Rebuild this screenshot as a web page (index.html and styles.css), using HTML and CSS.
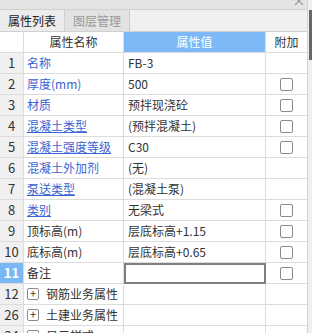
FILE: index.html
```html
<!DOCTYPE html>
<html lang="zh-CN">
<head>
  <meta charset="UTF-8">
  <title>属性列表</title>
  <link rel="stylesheet" href="styles.css">
</head>
<body>
  <div class="frame">
    <div class="panel">
      <div class="strip">
        <svg class="close" width="10" height="10" viewBox="0 0 10 10">
          <path d="M1 -3 L9 5 M9 -3 L1 5" stroke="#9a9a9a" stroke-width="1.2" fill="none"/>
        </svg>
      </div>
      <div class="tabs">
        <div class="tab active">属性列表</div>
        <div class="tab">图层管理</div>
      </div>

      <div class="grid">
        <div class="cell num head"></div>
        <div class="cell head">属性名称</div>
        <div class="cell head value-head">属性值</div>
        <div class="cell head">附加</div>

        <div class="cell num">1</div>
        <div class="cell name link">名称</div>
        <div class="cell val">FB-3</div>
        <div class="cell add"></div>

        <div class="cell num">2</div>
        <div class="cell name link">厚度(mm)</div>
        <div class="cell val">500</div>
        <div class="cell add"><span class="check"></span></div>

        <div class="cell num">3</div>
        <div class="cell name link">材质</div>
        <div class="cell val">预拌现浇砼</div>
        <div class="cell add"><span class="check"></span></div>

        <div class="cell num">4</div>
        <div class="cell name link under">混凝土类型</div>
        <div class="cell val">(预拌混凝土)</div>
        <div class="cell add"><span class="check"></span></div>

        <div class="cell num">5</div>
        <div class="cell name link under">混凝土强度等级</div>
        <div class="cell val">C30</div>
        <div class="cell add"><span class="check"></span></div>

        <div class="cell num">6</div>
        <div class="cell name link">混凝土外加剂</div>
        <div class="cell val">(无)</div>
        <div class="cell add"></div>

        <div class="cell num">7</div>
        <div class="cell name link under">泵送类型</div>
        <div class="cell val">(混凝土泵)</div>
        <div class="cell add"></div>

        <div class="cell num">8</div>
        <div class="cell name link under">类别</div>
        <div class="cell val">无梁式</div>
        <div class="cell add"><span class="check"></span></div>

        <div class="cell num">9</div>
        <div class="cell name">顶标高(m)</div>
        <div class="cell val">层底标高+1.15</div>
        <div class="cell add"><span class="check"></span></div>

        <div class="cell num">10</div>
        <div class="cell name">底标高(m)</div>
        <div class="cell val">层底标高+0.65</div>
        <div class="cell add"><span class="check"></span></div>

        <div class="cell num selected">11</div>
        <div class="cell name">备注</div>
        <div class="cell val editing"></div>
        <div class="cell add"><span class="check"></span></div>

        <div class="cell num">12</div>
        <div class="cell name group"><span class="plus">+</span>钢筋业务属性</div>
        <div class="cell val"></div>
        <div class="cell add"></div>

        <div class="cell num">26</div>
        <div class="cell name group"><span class="plus">+</span>土建业务属性</div>
        <div class="cell val"></div>
        <div class="cell add"></div>

        <div class="cell num">34</div>
        <div class="cell name group"><span class="plus">+</span>显示样式</div>
        <div class="cell val"></div>
        <div class="cell add"></div>
      </div>
    </div>
    <div class="scrollbar"><div class="thumb"></div></div>
  </div>
</body>
</html>
```

FILE: styles.css
```css
body {
  margin: 0;
  background: #ffffff;
  font-family: "Noto Sans CJK SC", "Noto Sans", sans-serif;
  font-size: 12px;
  color: #333333;
}
.frame {
  display: flex;
  height: 333px;
  overflow: hidden;
}
.panel {
  width: 307px;
  border-right: 1px solid #d4d4d4;
}
.strip {
  height: 9px;
  background: #e4e4e4;
  border-bottom: 1px solid #d0d0d0;
  display: flex;
  justify-content: flex-end;
  overflow: hidden;
}
.close {
  margin-right: 3px;
}
.tabs {
  display: flex;
  height: 21px;
  background: #f0f0f0;
  border-bottom: 1px solid #d0d0d0;
}
.tab {
  width: 65px;
  box-sizing: border-box;
  text-align: center;
  line-height: 21px;
  font-size: 12px;
  color: #999999;
  background: #e2e2e2;
  border-right: 1px solid #cfcfcf;
}
.tab.active {
  color: #222222;
  background: #ececec;
}
.grid {
  display: grid;
  grid-template-columns: 24px 100px 142px 41px;
  grid-auto-rows: 21px;
}
.cell {
  box-sizing: border-box;
  border-right: 1px solid #dcdcdc;
  border-bottom: 1px solid #dcdcdc;
  line-height: 20px;
  white-space: nowrap;
  overflow: hidden;
}
.cell:nth-child(4n) {
  border-right: none;
}
.head {
  text-align: center;
  color: #333333;
}
.value-head {
  background: #7db9f6;
  color: #ffffff;
}
.num {
  background: #f0f0f0;
  text-align: center;
  font-size: 13px;
}
.num.head {
  background: #ffffff;
}
.num.selected {
  background: #7ab7f5;
  color: #ffffff;
  font-weight: bold;
}
.name {
  padding-left: 3px;
}
.link {
  color: #3b63d3;
}
.under {
  text-decoration: underline;
}
.val {
  padding-left: 4px;
}
.editing {
  border: 2px solid #7f7f7f;
}
.add {
  display: flex;
  align-items: center;
  justify-content: center;
}
.check {
  width: 13px;
  height: 13px;
  box-sizing: border-box;
  border: 1px solid #8a8a8a;
  border-radius: 2px;
  background: #ffffff;
}
.group {
  display: flex;
  align-items: center;
}
.plus {
  width: 12px;
  height: 12px;
  box-sizing: border-box;
  border: 1px solid #8a8a8a;
  border-radius: 2px;
  line-height: 9px;
  text-align: center;
  font-size: 11px;
  margin-right: 7px;
}
.scrollbar {
  flex: 1;
  background: #f0f0f0;
  display: flex;
  justify-content: flex-end;
}
.thumb {
  width: 3px;
  height: 50px;
  margin-top: 10px;
  background: #5f6873;
}
```
